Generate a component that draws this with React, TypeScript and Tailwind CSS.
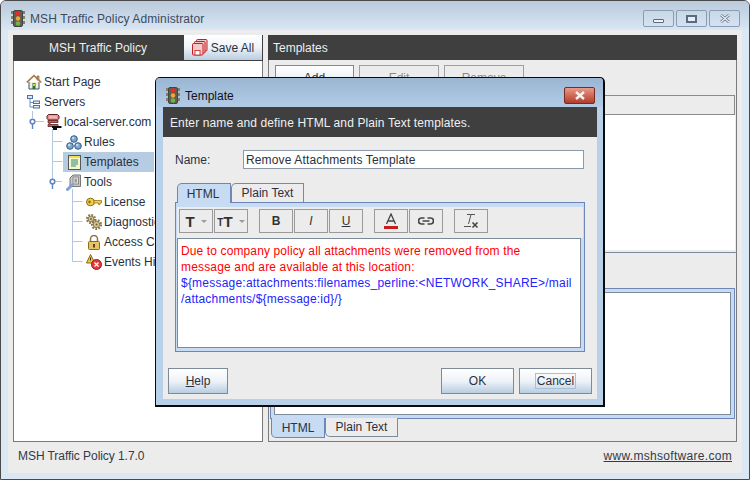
import React from "react";

function TrafficLight({ className = "" }: { className?: string }) {
  return (
    <svg width="14" height="17" viewBox="0 0 14 17" className={className}>
      <path d="M0 1h3v3H0zM11 1h3v3h-3zM0 6h3v3H0zM11 6h3v3h-3zM0 11h3v3H0zM11 11h3v3h-3z" fill="#8a7f62" />
      <rect x="2.500" y="0.500" width="9" height="16" rx="1.500" fill="#5f5e56" stroke="#45453f" />
      <circle cx="7" cy="3.500" r="2.200" fill="#ee2a24" />
      <circle cx="7" cy="8.500" r="2.200" fill="#f2a72e" />
      <circle cx="7" cy="13.500" r="2.200" fill="#6db54a" />
    </svg>
  );
}

function Home() {
  return (
    <svg width="16" height="16" viewBox="0 0 16 16">
      <path d="M11 2h2v4h-2z" fill="#c9a070" stroke="#7a5a3a" strokeWidth="0.600" />
      <path d="M3 8v7h10V8" fill="#f5f0d8" stroke="#33557f" />
      <path d="M0.800 8.400 8 1.600l7.200 6.800" fill="none" stroke="#a87a48" strokeWidth="1.500" />
      <rect x="6.500" y="9" width="3" height="6" fill="#2f6f3a" />
      <rect x="7" y="9.800" width="2" height="2" fill="#d8e04a" />
    </svg>
  );
}

function ServersIcon() {
  return (
    <svg width="14" height="14" viewBox="0 0 14 14" fill="none">
      <path d="M3 3v9h3M3 7.500h3" stroke="#6d8fbd" />
      <rect x="0.500" y="0.500" width="5" height="3" fill="#dfe9f5" stroke="#4a73a8" />
      <rect x="6.500" y="6" width="6" height="2.500" fill="#dfe9f5" stroke="#4a73a8" />
      <rect x="6.500" y="10.500" width="6" height="2.500" fill="#dfe9f5" stroke="#4a73a8" />
    </svg>
  );
}

function ServerRed() {
  return (
    <svg width="16" height="16" viewBox="0 0 16 16">
      <path d="M2.500 0.500h9l1.500 1.500v2.500l-1.500 1.500h-9L1 4.500V2z" fill="#e58a8a" stroke="#5f2020" />
      <path d="M2 6.500h10v2H4v2h8v2H2v-2h1v-2H2z" fill="#d25a5a" stroke="#5f2020" strokeWidth="0.800" />
      <path d="M3 2.200h8M3 3.800h8" stroke="#fbe2e2" strokeWidth="0.700" />
      <path d="M6 12h9.500v2H11v2H7v-2H6z" fill="#0c0c0c" />
    </svg>
  );
}

function Rules() {
  const c = (x: number, y: number) => (
    <g key={x + "-" + y}>
      <circle cx={x} cy={y} r="3.300" fill="#7ea6cc" stroke="#2d5a8c" />
      <circle cx={x - 0.8} cy={y - 1} r="1.200" fill="#c7dcf0" />
    </g>
  );
  return (
    <svg width="16" height="15" viewBox="0 0 16 15">
      {c(8, 4)}
      {c(4, 11)}
      {c(12, 11)}
    </svg>
  );
}

function TemplatesIcon() {
  return (
    <svg width="13" height="15" viewBox="0 0 13 15">
      <rect x="0.500" y="0.500" width="12" height="14" fill="#f8f7c8" stroke="#55585c" />
      <rect x="1" y="1" width="11" height="2" fill="#f0e04a" />
      <path d="M3 5h7M3 7h7M3 9h7M3 11h5" stroke="#1f8a80" />
    </svg>
  );
}

function ToolsIcon() {
  return (
    <svg width="16" height="17" viewBox="0 0 16 17">
      <path d="M4 4l3-3h7.500v11.500H4z" fill="#c8c8c8" stroke="#777" />
      <rect x="7" y="3" width="5.500" height="7" fill="#e6e6e6" stroke="#888" />
      <rect x="8.500" y="4.500" width="2.500" height="4" fill="#9a9a9a" />
      <path d="M1.500 15.500 6 11" stroke="#7ea0d8" strokeWidth="3" strokeLinecap="round" />
    </svg>
  );
}

function Key() {
  return (
    <svg width="16" height="10" viewBox="0 0 16 10">
      <ellipse cx="4.500" cy="5" rx="4" ry="3.800" fill="#f2cf4a" stroke="#8a6a10" />
      <ellipse cx="3.500" cy="5" rx="1.200" ry="1.400" fill="#8a6a10" />
      <path d="M8 3.500h7.500v2.500h-1.500v1.500h-1.500V6H8z" fill="#f2cf4a" stroke="#8a6a10" strokeWidth="0.700" />
    </svg>
  );
}

function Gears() {
  const gear = (cx: number, cy: number, r: number) => (
    <g key={cx}>
      <circle cx={cx} cy={cy} r={r} fill="none" stroke="#8a7a52" strokeWidth={r * 0.8} strokeDasharray="1.600 1.200" />
      <circle cx={cx} cy={cy} r={r * 0.8} fill="#d8c690" stroke="#7a6638" strokeWidth="0.800" />
      <circle cx={cx} cy={cy} r={r * 0.25} fill="#6a5a38" />
    </g>
  );
  return (
    <svg width="16" height="16" viewBox="0 0 16 16">
      {gear(5, 5, 3.6)}
      {gear(10.5, 10.5, 4)}
    </svg>
  );
}

function Lock() {
  return (
    <svg width="12" height="15" viewBox="0 0 12 15">
      <path d="M2.500 7V4a3.500 3.500 0 0 1 7 0v3" fill="none" stroke="#8a7440" strokeWidth="1.500" />
      <rect x="0.500" y="6.500" width="11" height="8" rx="1" fill="#e3c46a" stroke="#8a6a20" />
      <rect x="5" y="9" width="2" height="3.500" fill="#5a4518" />
    </svg>
  );
}

function Events() {
  return (
    <svg width="16" height="16" viewBox="0 0 16 16">
      <path d="M4.500 0.500 9 9H0.500z" fill="#efc04a" stroke="#8a6a10" />
      <path d="M4.500 3.500v3" stroke="#333" />
      <circle cx="10.500" cy="10.500" r="5" fill="#e23a3a" stroke="#a51a1a" />
      <path d="M8.500 8.500l4 4M12.500 8.500l-4 4" stroke="#fff" strokeWidth="1.300" />
    </svg>
  );
}

function SaveAll() {
  const sheet = (x: number, y: number) => (
    <g key={x}>
      <rect x={x + 0.5} y={y + 0.5} width="10.500" height="11.500" rx="1" fill="#f3c9c9" stroke="#c42222" />
      <rect x={x + 3} y={y + 7.5} width="5" height="4.500" fill="#fff" stroke="#c42222" strokeWidth="0.800" />
    </g>
  );
  return (
    <svg width="16" height="17" viewBox="0 0 16 17">
      {sheet(4, 0)}
      {sheet(2, 2)}
      {sheet(0, 4)}
    </svg>
  );
}

function Knob() {
  return (
    <svg width="7" height="11" viewBox="0 0 7 11" className="block">
      <path d="M3.500 5v6" stroke="#5f83c4" strokeWidth="1.400" />
      <circle cx="3.500" cy="3.500" r="2.300" fill="#fff" stroke="#5f83c4" strokeWidth="1.600" />
    </svg>
  );
}

const rows = [
  { label: "Start Page", icon: <Home />, pad: "pl-[11px]" },
  { label: "Servers", icon: <ServersIcon />, pad: "pl-[11px]" },
  { label: "local-server.com", icon: <ServerRed />, pad: "pl-[31px]" },
  { label: "Rules", icon: <Rules />, pad: "pl-[51px]" },
  { label: "Templates", icon: <TemplatesIcon />, pad: "pl-[51px]", selected: true },
  { label: "Tools", icon: <ToolsIcon />, pad: "pl-[51px]" },
  { label: "License", icon: <Key />, pad: "pl-[71px]" },
  { label: "Diagnostics", icon: <Gears />, pad: "pl-[71px]" },
  { label: "Access Control", icon: <Lock />, pad: "pl-[71px]" },
  { label: "Events History", icon: <Events />, pad: "pl-[71px]" },
];

function Tree() {
  return (
    <div className="relative pt-[11px]">
      <svg className="absolute left-0 top-0" width="130" height="240" viewBox="0 0 130 240" fill="none" stroke="#b4c6dd">
        <path d="M18.500 50v7M22 60.500h8" />
        <path d="M38.500 68v52M38.500 80.500h10M38.500 100.500h10M42 120.500h6" />
        <path d="M58.500 128v72.500M58.500 140.500h10M58.500 160.500h10M58.500 180.500h10M58.500 200.500h10" />
      </svg>
      <div className="absolute left-[15px] top-[57px]"><Knob /></div>
      <div className="absolute left-[35px] top-[117px]"><Knob /></div>
      {rows.map((r) => (
        <div key={r.label} className={"relative h-5 flex items-center text-[12px] leading-5 whitespace-nowrap text-[#2b2f3c] " + r.pad}>
          <span className="relative z-10 flex justify-center shrink-0 w-[18px]">{r.icon}</span>
          <span className={r.selected ? "bg-[#b6cce3] h-5 ml-[-20px] pl-[21px] w-[91px] flex items-center" : "ml-px"}>{r.label}</span>
        </div>
      ))}
    </div>
  );
}

const gradBtn = "bg-gradient-to-b from-[#ffffff] via-[#eef3f8] to-[#b9cde0] border border-[#7d8b99] flex items-center justify-center text-[12px] text-[#2c3040]";

function Btn({ className, children }: { className: string; children: React.ReactNode }) {
  return <div className={gradBtn + " " + className}>{children}</div>;
}

function ToolBtn({ children, className = "w-[34px]" }: { children: React.ReactNode; className?: string }) {
  return <div className={"h-6 bg-[#ececec] border border-[#9a9a9a] flex items-center justify-center text-[12px] text-[#333] shrink-0 " + className}>{children}</div>;
}

function Caret() {
  return <span className="ml-[6px] w-0 h-0 border-x-[3px] border-x-transparent border-t-[3px] border-t-[#9c9c9c]" />;
}

function Dialog() {
  return (
    <div className="absolute left-[154px] top-[76px] w-[450px] h-[330px] rounded-t-[5px] border-2 border-l-[1px] border-t-[1px] border-[#0a0a0a] bg-[#b8d0e9] flex flex-col">
      <div className="h-[29px] shrink-0 bg-gradient-to-b from-[#9ab6d3] to-[#b3cce6] rounded-t-[4px] flex items-center pt-[6px] pl-[10px] pr-[8px]">
        <TrafficLight />
        <span className="ml-[5px] text-[12px] text-[#101020]">Template</span>
        <div className="ml-auto w-[31px] h-[17px] rounded-[2px] border border-[#7a2a22] bg-gradient-to-b from-[#e89a8a] via-[#d06a55] to-[#b03d2c] flex items-center justify-center">
          <svg width="12" height="9" viewBox="0 0 12 9"><path d="M2 1l8 7M10 1L2 8" stroke="#f3f3f3" strokeWidth="2.400" /></svg>
        </div>
      </div>
      <div className="ml-[7px] mr-[6px] mb-[6px] flex-1 flex flex-col bg-[#ececec] min-h-0">
        <div className="h-[30px] shrink-0 bg-[#3f3f3f] text-[#f0f0f0] text-[12px] tracking-[0.12px] flex items-center pt-[1px] pl-[7px]">
          Enter name and define HTML and Plain Text templates.
        </div>
        <div className="flex items-center mt-[13px] pl-[12px]">
          <span className="w-[68px] text-[12px] text-[#2c3040]">Name:</span>
          <div className="w-[341px] h-[19px] bg-white border border-[#8b99a8] text-[12px] tracking-[0.14px] text-[#2c3040] pl-[2px] flex items-center">Remove Attachments Template</div>
        </div>
        <div className="flex mt-[14px] ml-[14px] h-[19px] relative z-10">
          <div className="w-[54px] h-[20px] bg-[#c7dcf2] border border-b-0 border-[#6d86b8] rounded-tl-[5px] text-[12px] text-[#2c3040] flex items-center justify-center pr-[2px]">HTML</div>
          <div className="w-[73px] h-[19px] bg-[#ececec] border border-b-0 border-[#7d8b99] rounded-tl-[5px] text-[12px] text-[#2c3040] flex items-center justify-center">Plain Text</div>
        </div>
        <div className="ml-[12px] w-[410px] h-[150px] border border-[#6d86b8] bg-[#c7dcf2] p-[1px] flex flex-col">
          <div className="bg-[#ececec] mt-[3px] h-[31px] flex pl-[2px] items-start pt-[2px]">
            <ToolBtn><span className="font-bold text-[15px] leading-none">T</span><Caret /></ToolBtn>
            <ToolBtn className="w-[34px] ml-px"><span className="font-bold text-[10px] leading-none mt-[3px]">T</span><span className="font-bold text-[15px] leading-none">T</span><Caret /></ToolBtn>
            <ToolBtn className="w-[34px] ml-[11px]"><b>B</b></ToolBtn>
            <ToolBtn className="w-[34px] ml-px"><i>I</i></ToolBtn>
            <ToolBtn className="w-[34px] ml-px"><u>U</u></ToolBtn>
            <ToolBtn className="w-[34px] ml-[11px]">
              <svg width="14" height="17" viewBox="0 0 14 17"><path d="M2.500 11 7 1l4.500 10M4 8h6" fill="none" stroke="#444" strokeWidth="1.300" /><rect x="0" y="13" width="14" height="3" fill="#c41e1e" /></svg>
            </ToolBtn>
            <ToolBtn className="w-[34px] ml-px">
              <svg width="16" height="8" viewBox="0 0 16 8"><path d="M6.500 1H3.500a3 3 0 0 0 0 6h3M9.500 1h3a3 3 0 0 1 0 6h-3M4.500 4h7" fill="none" stroke="#444" strokeWidth="1.700" /></svg>
            </ToolBtn>
            <ToolBtn className="w-[34px] ml-[11px]">
              <svg width="16" height="16" viewBox="0 0 16 16"><path d="M4 1.500h8M8 1.500 5.500 11M1 13.500h7" fill="none" stroke="#555" /><path d="M9.500 9.500l5 5M14.500 9.500l-5 5" stroke="#444" strokeWidth="1.600" /></svg>
            </ToolBtn>
          </div>
          <div className="flex-1 bg-white border border-[#7d8b99] text-[12px] leading-4 pl-[3px] pt-[4px] mr-[2px] mb-[2px]">
            <div className="text-[#ff0000]"><div className="tracking-[0.12px]">Due to company policy all attachments were removed from the</div><div className="tracking-[0.16px]">message and are available at this location:</div></div>
            <div className="text-[#2323ff]"><div className="tracking-[0.22px]">{"${message:attachments:filenames_perline:<NETWORK_SHARE>/mail"}</div><div className="tracking-[0.2px]">{"/attachments/${message:id}/}"}</div></div>
          </div>
        </div>
        <div className="flex mt-[16px] pl-[5px] pr-[5px]">
          <Btn className="w-[60px] h-[26px]"><span><u>H</u>elp</span></Btn>
          <Btn className="w-[73px] h-[26px] ml-auto">OK</Btn>
          <Btn className="w-[73px] h-[26px] ml-[5px]"><span className="border border-[#a9bfd6] px-px leading-[14px]">Cancel</span></Btn>
        </div>
      </div>
    </div>
  );
}

export default function App() {
  return (
    <div className="relative w-[750px] h-[480px] overflow-hidden border border-[#4a4a4a] rounded-t-[6px] bg-[#dbe7f3] flex flex-col text-[#2c3040] [font-family:'Liberation_Sans',Arial,sans-serif]">
      <div className="h-[29px] shrink-0 bg-gradient-to-b from-[#b9cadc] to-[#d9e6f3] flex items-center pt-[6px] pl-[10px] pr-[9px]">
        <TrafficLight />
        <span className="ml-[5px] text-[12px] tracking-[0.1px] text-[#3b4a5e]">MSH Traffic Policy Administrator</span>
        <div className="ml-auto flex gap-[2px]">
          <div className="w-[31px] h-[17px] rounded-[2px] border border-[#8a9cb4] bg-gradient-to-b from-[#c8d8e8] to-[#d4e2f0] flex items-center justify-center">
            <span className="w-[11px] h-[4px] mt-[5px] bg-[#f2f2f2] border border-[#5a6b80] rounded-[1px]" />
          </div>
          <div className="w-[31px] h-[17px] rounded-[2px] border border-[#8a9cb4] bg-gradient-to-b from-[#c8d8e8] to-[#d4e2f0] flex items-center justify-center">
            <span className="w-[11px] h-[8px] border-2 border-[#5a6b80] bg-[#e6eef6]" />
          </div>
          <div className="w-[31px] h-[17px] rounded-[2px] border border-[#8a9cb4] bg-gradient-to-b from-[#c8d8e8] to-[#d4e2f0] flex items-center justify-center">
            <svg width="12" height="9" viewBox="0 0 12 9"><path d="M2 1l8 7M10 1L2 8" stroke="#5a6b80" strokeWidth="2.600" /><path d="M2 1l8 7M10 1L2 8" stroke="#f2f2f2" strokeWidth="1.200" /></svg>
          </div>
        </div>
      </div>
      <div className="mx-[7px] mb-[6px] flex-1 bg-[#ececec] flex flex-col min-h-0">
        <div className="flex-1 flex gap-[5px] px-[5px] pt-[5px] min-h-0">
          <div className="w-[250px] border border-[#7a7a7a] border-t-0 bg-white flex flex-col">
            <div className="h-[26px] shrink-0 bg-[#3f3f3f] flex -mx-px">
              <div className="flex-1 flex items-center justify-center text-[12px] text-[#eeeeee]">MSH Traffic Policy</div>
              <div className="w-[80px] border border-t-0 border-[#3f3f3f] bg-gradient-to-b from-[#ffffff] via-[#eef3f8] to-[#b9cde0] flex items-center justify-center gap-[3px] text-[12px] text-[#2c3040]">
                <SaveAll />Save All
              </div>
            </div>
            <Tree />
          </div>
          <div className="w-[469px] border border-[#7a7a7a] border-t-0 flex flex-col">
            <div className="h-[25px] shrink-0 bg-[#3f3f3f] -mx-px flex items-center pl-[5px] text-[12px] text-[#eeeeee]">Templates</div>
            <div className="flex pl-[6px] mt-[5px] h-[25px] shrink-0">
              <Btn className="w-[79px] h-[25px]">Add</Btn>
              <div className="w-[80px] h-[25px] ml-[5px] border border-[#a0a0a0] flex items-center justify-center text-[12px] text-[#8a8a8a]">Edit</div>
              <div className="w-[80px] h-[25px] ml-[5px] border border-[#a0a0a0] flex items-center justify-center text-[12px] text-[#8a8a8a]">Remove</div>
            </div>
            <div className="mt-[5px] mx-px h-[20px] shrink-0 border border-[#8a8a8a] bg-[#ececec]" />
            <div className="h-[135px] shrink-0 bg-white mx-[1px]" />
            <div className="h-px bg-[#7a8a9a] shrink-0 mt-[2px] -mx-px" />
            <div className="h-[35px] shrink-0" />
            <div className="mx-[1px] h-[131px] shrink-0 border border-[#6d86b8] bg-[#c7dcf2] p-[3px]">
              <div className="h-full bg-white border border-[#7d8b99]" />
            </div>
            <div className="flex ml-[2px] h-[20px] -mt-px">
              <div className="w-[54px] h-[20px] bg-[#c7dcf2] border border-t-0 border-[#6d86b8] rounded-bl-[5px] text-[12px] flex items-center justify-center">HTML</div>
              <div className="w-[73px] h-[19px] bg-[#ececec] border border-t-0 border-[#7d8b99] rounded-bl-[5px] text-[12px] flex items-center justify-center">Plain Text</div>
            </div>
          </div>
        </div>
        <div className="h-[31px] shrink-0 flex items-center justify-between px-[10px] pb-[4px] text-[12px] text-[#333a48]">
          <span className="tracking-[-0.06px]">MSH Traffic Policy 1.7.0</span>
          <span className="underline tracking-[0.3px]">www.mshsoftware.com</span>
        </div>
      </div>
      <Dialog />
    </div>
  );
}
